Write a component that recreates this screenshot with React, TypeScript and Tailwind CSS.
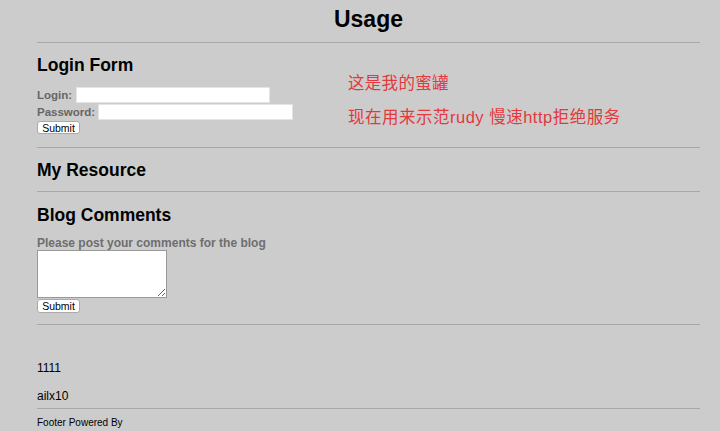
export default function App() {
  const font = { fontFamily: '"Liberation Sans", Arial, sans-serif' };
  const cjk = { fontFamily: '"Liberation Sans", "Noto Sans CJK SC", sans-serif' };
  return (
    <div className="relative min-h-[431px] bg-[#cccccc] pl-[37px] pr-[20px] text-black" style={font}>
      <h1 className="pt-[6px] text-center text-[23px] font-bold leading-[26px]">Usage</h1>
      <hr className="mt-[10px] border-0 border-t border-[#a8a8a8]" />
      <h2 className="mt-[12px] text-[17.5px] font-bold leading-[21px]">Login Form</h2>
      <div className="mt-[11px] flex items-center h-[16px]">
        <span className="text-[11.5px] font-bold text-[#666] leading-[14px]">Login:</span>
        <input className="ml-[4px] h-[16px] w-[194px] bg-white border border-[#e4e4e4] outline-none" />
      </div>
      <div className="mt-[1px] flex items-center h-[16px]">
        <span className="text-[11.5px] font-bold text-[#666] leading-[14px]">Password:</span>
        <input className="ml-[3px] h-[16px] w-[195px] bg-white border border-[#e4e4e4] outline-none" />
      </div>
      <button className="mt-[1px] flex h-[13px] w-[43px] items-center justify-center rounded-[3px] border border-[#aaa] bg-white text-[10.5px] leading-[12px]">Submit</button>
      <hr className="mt-[13px] border-0 border-t border-[#a8a8a8]" />
      <h2 className="mt-[12px] text-[17.5px] font-bold leading-[21px]">My Resource</h2>
      <hr className="mt-[10px] border-0 border-t border-[#a8a8a8]" />
      <h2 className="mt-[13px] text-[17.5px] font-bold leading-[21px]">Blog Comments</h2>
      <p className="mt-[10px] text-[12px] font-bold text-[#6e6e6e] leading-[14px]">Please post your comments for the blog</p>
      <textarea className="mt-0 block h-[48px] w-[130px] bg-white border border-[#999] outline-none resize" />
      <button className="mt-[1px] flex h-[14px] w-[43px] items-center justify-center rounded-[3px] border border-[#aaa] bg-white text-[10.5px] leading-[12px]">Submit</button>
      <hr className="mt-[11px] border-0 border-t border-[#a8a8a8]" />
      <p className="mt-[36px] text-[12px] leading-[14px]">1111</p>
      <p className="mt-[14px] text-[12px] leading-[14px]">ailx10</p>
      <hr className="mt-[5px] border-0 border-t border-[#a8a8a8]" />
      <p className="mt-[7px] text-[10px] leading-[14px]">Footer Powered By</p>

      <div className="absolute left-[348px] top-[73px] text-[16.5px] leading-[20px] text-[#e2393d] tracking-[0.3px]" style={cjk}>
        这是我的蜜罐
      </div>
      <div className="absolute left-[348px] top-[107px] text-[16.5px] leading-[20px] text-[#e2393d] whitespace-nowrap tracking-[0.5px]" style={cjk}>
        现在用来示范rudy 慢速http拒绝服务
      </div>
    </div>
  );
}
